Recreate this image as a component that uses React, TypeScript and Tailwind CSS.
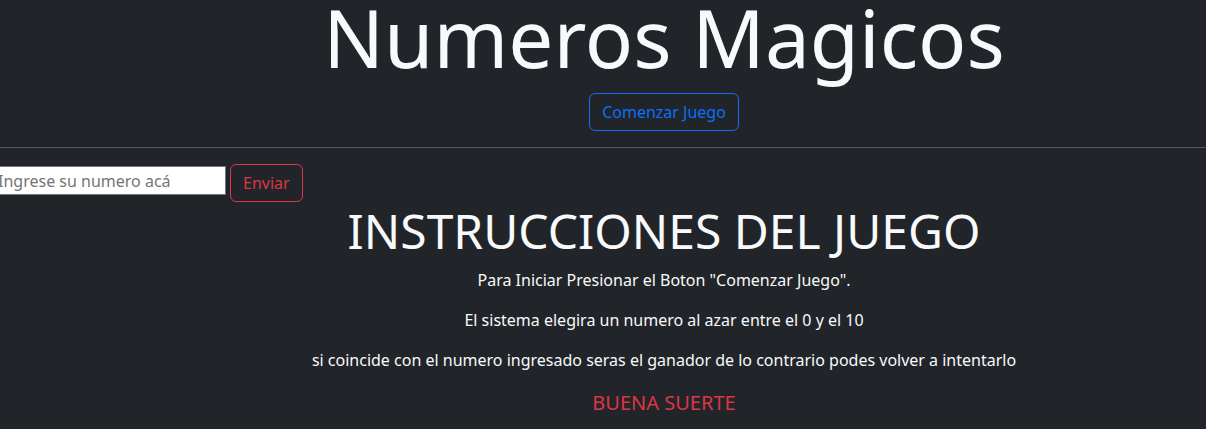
export default function App() {
  return (
    <div className="w-full h-screen overflow-hidden bg-[#212529] text-[#dee2e6] font-['Noto_Sans',sans-serif]">
      {/* page is scrolled a little: offset the whole document */}
      <div className="-mt-[11px] -ml-[6px] w-[1340px]">
        {/* HEADER */}
        <header className="flex flex-col items-center">
          <h1 className="text-[80px] font-normal leading-[1.2] text-[#f8f9fa] mb-2">
            Numeros Magicos
          </h1>
          <button className="h-[38px] px-3 rounded-md border border-[#0d6efd] text-[#0d6efd] text-base leading-6">
            Comenzar Juego
          </button>
        </header>

        <hr className="my-4 border-t border-[#58595d]" />

        {/* INPUT ROW */}
        <div className="flex items-start gap-[4px]">
          <input
            type="text"
            placeholder="Ingrese su numero acá"
            className="mt-[2px] w-[232px] h-[29px] px-[3px] bg-white border border-[#767676] text-base text-black placeholder:text-[#757575] outline-none"
          />
          <button className="h-[38px] px-3 rounded-md border border-[#dc3545] text-[#dc3545] text-base leading-6">
            Enviar
          </button>
        </div>

        {/* INSTRUCTIONS */}
        <section className="flex flex-col items-center text-center">
          <h2 className="text-[48px] font-normal leading-[1.2] text-[#f8f9fa] mb-2">
            INSTRUCCIONES DEL JUEGO
          </h2>
          <p className="text-base leading-6 mb-4 text-[#f8f9fa]">
            Para Iniciar Presionar el Boton "Comenzar Juego".
          </p>
          <p className="text-base leading-6 mb-4 text-[#f8f9fa]">
            El sistema elegira un numero al azar entre el 0 y el 10
          </p>
          <p className="text-base leading-6 mb-4 text-[#f8f9fa]">
            si coincide con el numero ingresado seras el ganador de lo contrario podes volver a intentarlo
          </p>
          <p className="text-[20px] leading-[30px] text-[#dc3545]">BUENA SUERTE</p>
        </section>
      </div>
    </div>
  );
}
